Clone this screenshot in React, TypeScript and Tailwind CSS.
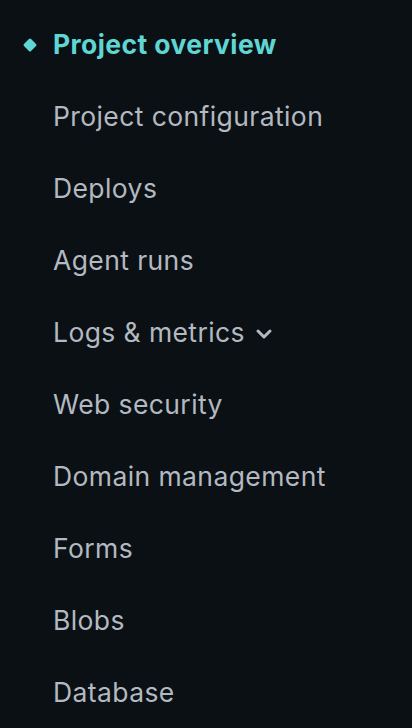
import React from 'react';
import { ChevronDown } from 'lucide-react';

const items = [
  'Project configuration',
  'Deploys',
  'Agent runs',
  'Logs & metrics',
  'Web security',
  'Domain management',
  'Forms',
  'Blobs',
  'Database',
];

export default function App() {
  return (
    <div
      className="min-h-screen w-full bg-[#0b1014] pt-[9px]"
      style={{ fontFamily: 'Inter, "Noto Sans", sans-serif' }}
    >
      <nav className="flex flex-col">
        <a className="relative flex h-[72px] items-center pl-[53px] text-[26.5px] font-bold tracking-[0.4px] text-[#5fd6d4]">
          <span className="absolute left-[25px] top-1/2 h-[10px] w-[10px] -translate-y-1/2 rotate-45 rounded-[1.5px] bg-[#5fd6d4]" />
          Project overview
        </a>
        {items.map((label) => (
          <a
            key={label}
            className="flex h-[72px] items-center pl-[53px] text-[26.5px] font-normal tracking-[0.4px] text-[#b3b9c1]"
          >
            {label}
            {label === 'Logs & metrics' && (
              <ChevronDown className="ml-[7px] mt-[1px] h-[24px] w-[24px]" strokeWidth={3} />
            )}
          </a>
        ))}
      </nav>
    </div>
  );
}
